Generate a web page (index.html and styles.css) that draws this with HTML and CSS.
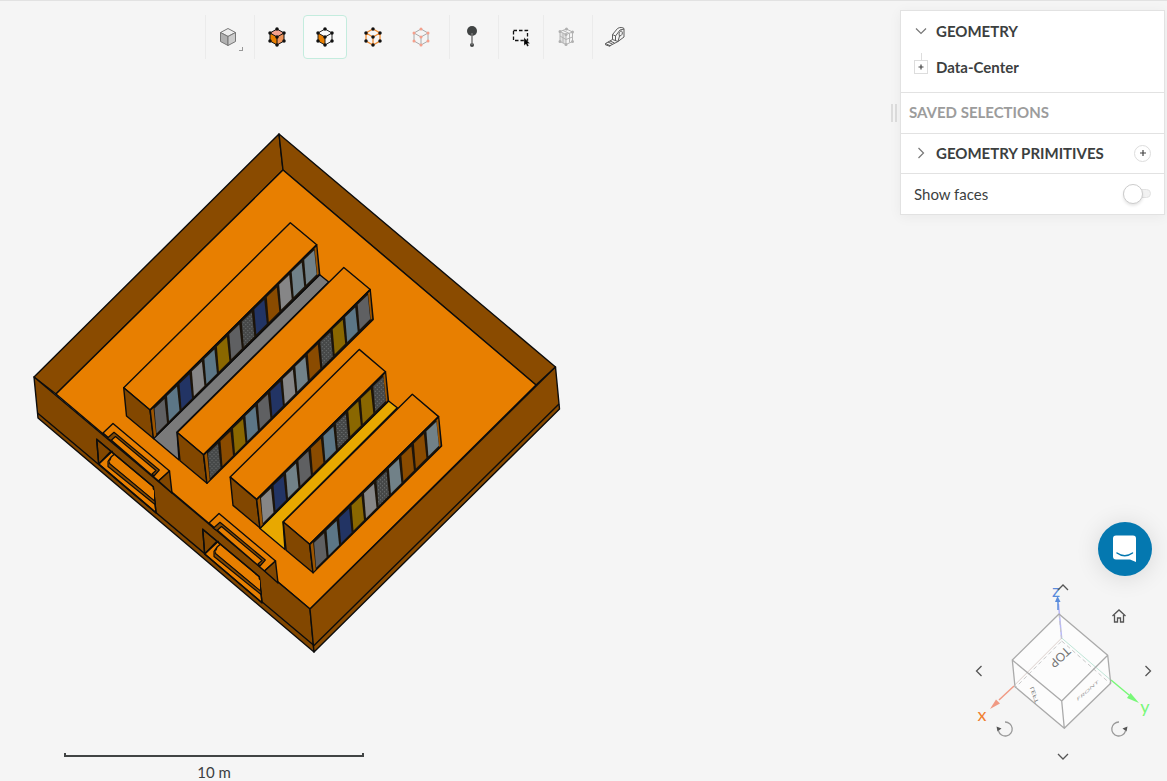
FILE: index.html
```
<!DOCTYPE html>
<html lang="en">
<head>
<meta charset="utf-8">
<title>Data-Center</title>
<link rel="stylesheet" href="styles.css">
</head>
<body>
<main class="viewport">
  <svg class="scene" width="600" height="700" viewBox="0 0 600 700" role="img" aria-label="Data center model">
    <defs>
      <path id="panel" d="M154.5 408.5l10-9.5 2.500 24-10.500 10.500z"/>
      <pattern id="mesh" width="4" height="4" patternUnits="userSpaceOnUse">
        <path fill="#464848" d="M0 0h4v4H0z"/><path fill="#727676" d="M0 1h1v1H0zM2 3h1v1H2z"/>
      </pattern>
      <g id="dock">
        <path class="floor" d="M103 433l10-9.500 56.500 47.500-11 10z"/>
        <path class="front" d="M169.500 471l2.500 22-13.500-12z"/>
        <path class="slot" d="M107.300 438.300l6.700-6 45.300 37.700-5.300 6-2-2 4-3.500-40.500-34-4.500 4z"/>
        <path class="front" d="M96.700 439.300l14.300 12-12.300 13z"/>
        <path class="floor" d="M98.700 464l12.300-12.500 42.300 35.200 2.700 26z"/>
        <path class="line" d="M96.700 439.300l56.600 47.400 2.700 26-57.300-48.700zM98.700 464l14-13"/>
        <path class="slot" d="M111.300 456.700l-3.300 4.600v5.200l47 38v-3.200L109.500 463.500z"/>
        <path class="line" d="M111.300 456.700l3-2.500"/>
        <path fill="#e87f00" d="M112 457.500l-2.500 4.500 44.500 37.500v-9z"/>
      </g>
      <g id="long-rack">
        <path class="floor" d="M123.700 387.700l166.600-165 26.400 22L150 410z"/>
        <path class="front" d="M123.700 387.700L150 410l3.500 28.500-27-22.500z"/>
        <path class="frame" d="M150 410l166.700-165.300 3 30L153.500 438.500z"/>
        <path class="edge" d="M151 410.500l2.500-2.500 2.700 27-2.200 2.500zM314.500 248.500l1.800-1.800 2.400 27-1.500 1.500z"/>
      </g>
      <g id="short-rack">
        <path class="floor" d="M123.700 387.700l129-127.700 26.300 22.300L150 410z"/>
        <path class="front" d="M123.700 387.700L150 410l3.500 28.500-27-22.500z"/>
        <path class="frame" d="M150 410l129-127.700 3 29.500L153.500 438.500z"/>
        <path class="edge" d="M151 410.500l2.500-2.500 2.700 27-2.200 2.500zM276.800 286l1.800-1.800 2.400 27-1.500 1.500z"/>
      </g>
    </defs>
    <path class="wall" d="M279 134l4 36L56 394l-22-17z"/>
    <path class="wall" d="M279 134l276.500 233L536 385 283 170z"/>
    <path class="floor" d="M283 170l253 215-226 224L56 394z"/>
    <path class="aisle" d="M319.700 274.700l9 7.300L177 432l2 28-25.500-21.500z"/>
    <path class="aisle-warm" d="M388.300 400.700l9 7L283 522l2 27.500-25-21z"/>

    <g>
      <use href="#long-rack"/>
      <use href="#panel" class="gray"/>
      <use href="#panel" class="steel" x="12.500" y="-12.400"/>
      <use href="#panel" class="navy" x="25" y="-24.800"/>
      <use href="#panel" class="silver" x="37.400" y="-37.200"/>
      <use href="#panel" class="steel" x="49.900" y="-49.600"/>
      <use href="#panel" class="olive" x="62.400" y="-62"/>
      <use href="#panel" class="gray" x="74.800" y="-74.400"/>
      <use href="#panel" class="mesh" x="87.300" y="-86.800"/>
      <use href="#panel" class="navy" x="99.800" y="-99.200"/>
      <use href="#panel" class="brown" x="112.300" y="-111.600"/>
      <use href="#panel" class="silver" x="124.700" y="-124"/>
      <use href="#panel" class="mist" x="137.200" y="-136.400"/>
      <use href="#panel" class="mist" x="149.700" y="-148.800"/>
    </g>
    <g transform="translate(53.500 44.800)">
      <use href="#long-rack"/>
      <use href="#panel" class="mesh"/>
      <use href="#panel" class="brown" x="12.500" y="-12.400"/>
      <use href="#panel" class="olive" x="25" y="-24.800"/>
      <use href="#panel" class="steel" x="37.400" y="-37.200"/>
      <use href="#panel" class="gray" x="49.900" y="-49.600"/>
      <use href="#panel" class="navy" x="62.400" y="-62"/>
      <use href="#panel" class="silver" x="74.800" y="-74.400"/>
      <use href="#panel" class="mist" x="87.300" y="-86.800"/>
      <use href="#panel" class="brown" x="99.800" y="-99.200"/>
      <use href="#panel" class="mesh" x="112.300" y="-111.600"/>
      <use href="#panel" class="olive" x="124.700" y="-124"/>
      <use href="#panel" class="steel" x="137.200" y="-136.400"/>
      <use href="#panel" class="gray" x="149.700" y="-148.800"/>
    </g>
    <g transform="translate(106.500 89.400)">
      <use href="#short-rack"/>
      <use href="#panel" class="silver"/>
      <use href="#panel" class="navy" x="12.500" y="-12.400"/>
      <use href="#panel" class="mist" x="25" y="-24.800"/>
      <use href="#panel" class="gray" x="37.400" y="-37.200"/>
      <use href="#panel" class="brown" x="49.900" y="-49.600"/>
      <use href="#panel" class="steel" x="62.400" y="-62"/>
      <use href="#panel" class="mesh" x="74.800" y="-74.400"/>
      <use href="#panel" class="olive" x="87.300" y="-86.800"/>
      <use href="#panel" class="olive" x="99.800" y="-99.200"/>
      <use href="#panel" class="mesh" x="112.300" y="-111.600"/>
    </g>
    <g transform="translate(159.600 134.300)">
      <use href="#short-rack"/>
      <use href="#panel" class="gray"/>
      <use href="#panel" class="steel" x="12.500" y="-12.400"/>
      <use href="#panel" class="navy" x="25" y="-24.800"/>
      <use href="#panel" class="olive" x="37.400" y="-37.200"/>
      <use href="#panel" class="silver" x="49.900" y="-49.600"/>
      <use href="#panel" class="mesh" x="62.400" y="-62"/>
      <use href="#panel" class="mist" x="74.800" y="-74.400"/>
      <use href="#panel" class="brown" x="87.300" y="-86.800"/>
      <use href="#panel" class="brown" x="99.800" y="-99.200"/>
      <use href="#panel" class="mist" x="112.300" y="-111.600"/>
    </g>

    <path class="front" d="M34 377l276 232 4 43L38 418z"/>
    <path class="wall" d="M310 609l245.500-242 4 42L314 652z"/>
    <path class="line" d="M37.500 413L314 645.500 559 404"/>
    <use href="#dock"/>
    <use href="#dock" x="106" y="90"/>
  </svg>

  <nav class="toolbar" aria-label="Viewer tools">
    <div class="group">
      <button class="tool" type="button" aria-label="Render mode">
        <svg width="24" height="24" viewBox="0 0 24 24" stroke="#777" stroke-linejoin="round"><path fill="#eee" d="M12 3.500l7.500 4-7.500 4-7.500-4z"/><path fill="#b0b0b0" d="M4.500 7.500l7.500 4v9l-7.500-4z"/><path fill="#ccc" d="M19.500 7.500l-7.500 4v9l7.500-4z"/></svg>
        <span class="corner"></span>
      </button>
    </div>
    <div class="group picks">
      <button class="tool" type="button" aria-label="Pick volumes">
        <svg width="24" height="24" viewBox="0 0 24 24"><path fill="#f4a08c" d="M12 4l7 4-7 4-7-4z"/><path fill="#e87f00" d="M5 8l7 4v8l-7-4z"/><path fill="#f0955c" d="M19 8l-7 4v8l7-4z"/><path fill="none" stroke="#111" d="M12 4l7 4v8l-7 4-7-4V8zM5 8l7 4 7-4M12 12v8"/><path class="nodes" d="M12 4h0M19 8h0M19 16h0M12 20h0M5 16h0M5 8h0M12 12h0"/></svg>
      </button>
      <button class="tool active" type="button" aria-label="Pick faces" aria-pressed="true">
        <svg width="24" height="24" viewBox="0 0 24 24"><path fill="#e87f00" d="M5 8l7 4v8l-7-4z"/><path fill="none" stroke="#222" d="M12 4l7 4v8l-7 4-7-4V8zM5 8l7 4 7-4M12 12v8"/><path class="nodes" d="M12 4h0M19 8h0M19 16h0M12 20h0M5 16h0M5 8h0M12 12h0"/></svg>
      </button>
      <button class="tool" type="button" aria-label="Pick edges">
        <svg width="24" height="24" viewBox="0 0 24 24"><path fill="none" stroke="#f08c32" stroke-width="1.300" d="M12 4l7 4v8l-7 4-7-4V8zM5 8l7 4 7-4M12 12v8"/><path class="nodes" d="M12 4h0M19 8h0M19 16h0M12 20h0M5 16h0M5 8h0M12 12h0"/></svg>
      </button>
      <button class="tool" type="button" aria-label="Pick vertices">
        <svg width="24" height="24" viewBox="0 0 24 24"><path fill="none" stroke="#aaa" d="M12 4l7 4v8l-7 4-7-4V8zM5 8l7 4 7-4M12 12v8"/><path class="nodes pale" d="M12 4h0M19 8h0M19 16h0M12 20h0M5 16h0M5 8h0M12 12h0"/></svg>
      </button>
    </div>
    <div class="group">
      <button class="tool" type="button" aria-label="Probe point">
        <svg width="24" height="24" viewBox="0 0 24 24" fill="#414444"><circle cx="12" cy="6" r="5"/><circle cx="12" cy="20" r="2"/><path stroke="#777" stroke-width="1.500" d="M12 8v12"/></svg>
      </button>
    </div>
    <div class="group tight">
      <button class="tool" type="button" aria-label="Box selection">
        <svg width="24" height="24" viewBox="0 0 24 24"><path fill="none" stroke="#111" stroke-width="1.300" stroke-dasharray="3.500 2" d="M4.500 5.500h14v10h-14z"/><path d="M15 12.500v8l2-1.500 1.200 2.500 1.600-.8-1.200-2.200h2.400z" stroke="#f5f5f5" stroke-width=".3"/></svg>
      </button>
    </div>
    <div class="group">
      <button class="tool" type="button" aria-label="Mesh clip">
        <svg width="24" height="24" viewBox="0 0 24 24" fill="none" stroke="#b4b4b4"><path fill="#e2e2e2" d="M6 6.500l6 3v10l-6-3z"/><path d="M6 6.500l6.500-2.500 6 3v9.500l-6.500 3M12 9.500l6.500-2.500M6 11l6 3.500 6.500-2.500M9 5.500l6.500 3v9M9 8v10"/><path class="nodes faded" d="M6 6.500h0M12.500 4h0M18.500 7h0M18.500 16.500h0M6 16.500h0M12 19.500h0M12 9.500h0"/></svg>
      </button>
    </div>
    <div class="group">
      <button class="tool" type="button" aria-label="Measure">
        <svg width="24" height="24" viewBox="0 0 24 24" fill="none" stroke="#5c5c5c" stroke-linejoin="round"><path d="M9.500 14.500V9.500l5-6c2-1.500 5.500-1.200 6.500 0v8.500l-6 4.500zM9.500 9.500l3 1.500v5M12.500 11l4.500-6 4-1M15 16.500l1.500-5.500c2.500 0 3.500-3 2.500-4.500s-4 1-2.500 4.500M9.500 14.500l-7 4 4.500 2.200 8-4.200M5 17l4.500 2.200M7 16l4.500 2M2.500 18.500v1.300l4.500 1.500v-.8"/></svg>
      </button>
    </div>
  </nav>

  <aside class="side">
    <span class="grip"></span>
    <div class="card">
      <section class="tree">
        <button class="heading" type="button" aria-expanded="true"><svg class="chevron" width="12" height="12" viewBox="0 0 12 12"><path d="M1 3.500l5 5 5-5"/></svg>GEOMETRY</button>
        <button class="heading" type="button" aria-expanded="false"><span class="expand"><svg width="12" height="12" viewBox="0 0 12 12"><path d="M3.500 6h5M6 3.500v5"/></svg></span>Data-Center</button>
      </section>
      <h2 class="row tall muted">SAVED SELECTIONS</h2>
      <div class="row">
        <button class="heading" type="button" aria-expanded="false"><svg class="chevron" width="12" height="12" viewBox="0 0 12 12"><path d="M3.500 1l5 5-5 5"/></svg>GEOMETRY PRIMITIVES</button>
        <button class="add" type="button" aria-label="Add primitive"><svg width="12" height="12" viewBox="0 0 12 12"><path d="M3 6h6M6 3v6"/></svg></button>
      </div>
      <div class="row tall">
        <label class="option" for="faces">Show faces</label>
        <input class="switch" id="faces" type="checkbox" role="switch">
      </div>
    </div>
  </aside>

  <div class="scale"><div class="ruler"></div>10 m</div>

  <button class="chat" type="button" aria-label="Open chat">
    <svg width="28" height="30" viewBox="0 0 28 30"><path fill="#fff" d="M5 1.500h17a3 3 0 0 1 3 3V28l-6-2.500H5a3 3 0 0 1-3-3v-18a3 3 0 0 1 3-3z"/><path fill="none" stroke="#0478b0" stroke-width="1.500" stroke-linecap="round" d="M6 19c4.500 3.500 11 3.500 15.500 0"/></svg>
  </button>

  <div class="navigator">
    <svg class="cube" viewBox="966 574 195 192" fill="none" role="img" aria-label="View cube">
      <path fill="#fff" fill-opacity=".65" d="M1059 614l48.700 41.300 3 28-46.400 45-49.300-41.600-2.700-26.700z"/>
      <path stroke="#b8b8f8" stroke-width="1.500" d="M1061.700 639l-3.200-35"/>
      <path stroke="#c0e6d8" d="M1061.700 638l49 42"/>
      <path stroke="#dcd0cc" d="M1061.700 638l-47 47"/>
      <path stroke="#c8c8c8" stroke-dasharray="4 3" d="M1059 614l2.700 27-46.700 47M1061.700 641l49 43"/>
      <path stroke="#f09a84" stroke-width="1.500" d="M1014 686l-15 14"/><path fill="#f09a84" d="M990 709l6-9.500 4 4z"/>
      <path stroke="#78f878" stroke-width="1.500" d="M1111 680l18 15"/><path fill="#78f878" d="M1139 703l-12-5 3.500-5z"/>
      <path stroke="#5a8cdc" stroke-width="1.500" d="M1058 610v-8"/><path fill="#5a8cdc" d="M1057.500 596l3 6h-5.500z"/>
      <path stroke="#aaa" stroke-width="1.300" stroke-linejoin="round" d="M1059 614l48.700 41.300-46 45.700-49.400-41zM1012.300 660l2.700 26.700 49.300 41.600 46.400-45-3-28M1061.700 701l2.600 27.300"/>
      <text class="face" transform="translate(1060 657) rotate(137)" text-anchor="middle" y="4" font-size="12">TOP</text>
      <text class="face" transform="matrix(.3 .9 .6 -.3 1036 694)" text-anchor="middle" font-size="8">LEFT</text>
      <text class="face faint" transform="matrix(.8 -.7 .1 .5 1088 692)" text-anchor="middle" font-size="8">FRONT</text>
      <text class="axis" x="982" y="721" fill="#f08030">x</text>
      <text class="axis" x="1145" y="713" fill="#78f878">y</text>
      <text class="axis" x="1056" y="597" fill="#5a8cdc">z</text>
    </svg>
    <button class="nav up" type="button" aria-label="Rotate up"><svg width="12" height="12" viewBox="0 0 12 12"><path d="M1 9l5-5 5 5"/></svg></button>
    <button class="nav home" type="button" aria-label="Home view"><svg width="14" height="14" viewBox="0 0 14 14"><path d="M.5 7L7 1l6.500 6M2.500 6v7h3V9h3v4h3V6"/></svg></button>
    <button class="nav left" type="button" aria-label="Rotate left"><svg width="12" height="12" viewBox="0 0 12 12"><path d="M8.500 1l-5 5 5 5"/></svg></button>
    <button class="nav right" type="button" aria-label="Rotate right"><svg width="12" height="12" viewBox="0 0 12 12"><path d="M3.500 1l5 5-5 5"/></svg></button>
    <button class="nav ccw" type="button" aria-label="Roll left"><svg width="18" height="18" viewBox="0 0 18 18"><path class="arc" d="M9 2a7 7 0 1 1-6.500 9"/><path class="tip" d="M.5 6.500l5 2-4 3z"/></svg></button>
    <button class="nav cw" type="button" aria-label="Roll right"><svg width="18" height="18" viewBox="0 0 18 18"><path class="arc" d="M9 2a7 7 0 1 0 6.500 9"/><path class="tip" d="M17.500 6.500l-5 2 4 3z"/></svg></button>
    <button class="nav down" type="button" aria-label="Rotate down"><svg width="12" height="12" viewBox="0 0 12 12"><path d="M1 3l5 5 5-5"/></svg></button>
  </div>
</main>
</body>
</html>
```
FILE: styles.css
```
* { box-sizing: border-box; }

body {
  margin: 0;
  font: 15px/20px Lato, "Open Sans", sans-serif;
  color: #3c3f3f;
}

button {
  border: 0;
  padding: 0;
  background: none;
  font: inherit;
  color: inherit;
  cursor: pointer;
}

svg { display: block; }

.viewport {
  position: relative;
  display: flex;
  justify-content: space-between;
  align-items: flex-start;
  height: 100vh;
  overflow: hidden;
  background: #f5f5f5;
  border-top: 1px solid #e2e2e2;
}

/* model */
.scene {
  position: absolute;
  top: -1px;
  left: 0;
  stroke-linejoin: round;
}
.scene .wall, .scene .front, .scene .floor, .aisle, .aisle-warm, .frame { stroke: #0c0c0c; stroke-width: 1.4; }
.wall { fill: #8a4b00; }
.front { fill: #824700; }
.floor { fill: #e87f00; }
.aisle { fill: #7a7a7a; }
.aisle-warm { fill: #e8a800; }
.frame { fill: #1c140a; }
.edge { fill: #9c5500; }
.line { fill: none; stroke: #0c0c0c; stroke-width: 1.4; }
.slot { fill: #824700; stroke: #0c0c0c; stroke-width: 1.2; }
.gray { fill: #5f6062; }
.steel { fill: #5c7686; }
.navy { fill: #223464; }
.silver { fill: #868687; }
.olive { fill: #8a6700; }
.mesh { fill: url(#mesh); }
.brown { fill: #8a4b00; }
.mist { fill: #718188; }

/* toolbar */
.toolbar {
  position: relative;
  display: flex;
  padding: 14px 0 0 205px;
}
.group {
  display: flex;
  gap: 4px;
  height: 44px;
  padding-right: 4px;
  border-left: 1px solid #ebebeb;
}
.picks { padding-right: 6px; }
.tight { padding-right: 0; }
.tool {
  position: relative;
  display: grid;
  place-items: center;
  width: 44px;
  height: 44px;
  border: 1px solid transparent;
  border-radius: 4px;
}
.tool.active { background: #fafafa; border-color: #c4ecde; }
.corner {
  position: absolute;
  right: 6px;
  bottom: 7px;
  width: 4px;
  height: 4px;
  border: solid #999;
  border-width: 0 1px 1px 0;
}
.nodes { fill: none; stroke: #111; stroke-width: 3.5; stroke-linecap: round; }
.nodes.pale { stroke: #f5a08c; stroke-width: 3; }
.nodes.faded { stroke: #b0b0b0; stroke-width: 3; }

/* side panel */
.side {
  position: relative;
  display: flex;
  align-items: center;
  gap: 3px;
  padding: 9px 2px 0 0;
}
.grip {
  width: 6px;
  height: 18px;
  border: solid #ddd;
  border-width: 0 2px;
}
.card {
  width: 265px;
  background: #fff;
  border: 1px solid #e2e2e2;
  box-shadow: 0 2px 12px #0000000d;
}
.tree {
  display: grid;
  gap: 16px;
  padding: 10px 14px 15px;
}
.heading {
  display: flex;
  align-items: center;
  gap: 9px;
  font-weight: 700;
}
.chevron { fill: none; stroke: #777; stroke-width: 1.2; }
.expand {
  position: relative;
  width: 12px;
  height: 12px;
  outline: 1px solid #ddd;
}
.expand::before {
  content: "";
  position: absolute;
  left: 6px;
  bottom: 12px;
  height: 8px;
  border-left: 1px solid #ddd;
}
.expand svg, .add svg { stroke: #444; stroke-width: 1.2; }
.row {
  display: flex;
  align-items: center;
  justify-content: space-between;
  min-height: 40px;
  margin: 0;
  padding: 0 13px 1px;
  border-top: 1px solid #e2e2e2;
}
.row .heading { margin-left: 1px; }
.tall { min-height: 41px; }
.muted {
  padding: 0 8px 2px;
  font-size: 15px;
  font-weight: 700;
  color: #9c9c9c;
}
.add {
  display: grid;
  place-items: center;
  width: 17px;
  height: 17px;
  border: 1px solid #ddd;
  border-radius: 50%;
}
.switch {
  appearance: none;
  position: relative;
  width: 28px;
  height: 9px;
  margin: 0;
  border: 1px solid #e2e2e2;
  border-radius: 5px;
  background: #f2f2f2;
}
.switch::before {
  content: "";
  position: absolute;
  left: -1px;
  top: -6px;
  width: 18px;
  height: 18px;
  border: 1px solid #ccc;
  border-radius: 50%;
  background: #fff;
  box-shadow: 0 2px 3px #0000001a;
}

/* overlays on the canvas */
.scale {
  position: absolute;
  left: 64px;
  bottom: -1px;
  width: 300px;
  text-align: center;
}
.ruler {
  height: 4px;
  margin-bottom: 5px;
  border: solid #414444;
  border-width: 0 2px 2px;
}
.chat {
  position: absolute;
  right: 15px;
  bottom: 205px;
  display: grid;
  place-items: center;
  width: 54px;
  height: 54px;
  border-radius: 50%;
  background: #0478b0;
  box-shadow: 0 2px 24px #0000001f;
}
.navigator {
  position: absolute;
  right: 6px;
  bottom: 15px;
  display: grid;
  grid-template: 26px 32px 78px 38px 18px / 26px 26px 90px 22px 4px 27px;
  place-items: center;
}
.cube { grid-area: 1 / 1 / 6 / 7; width: 195px; height: 192px; }
.face { fill: #777; }
.face.faint { fill: #999; }
.axis { font-size: 18px; text-anchor: middle; stroke: currentColor; stroke-width: 0; }
.nav { position: relative; }
.nav path { fill: none; stroke: #555; stroke-width: 1.3; }
.nav .arc { stroke: #999; }
.nav .tip { fill: #555; stroke: none; }
.up { grid-area: 1 / 3; }
.home { grid-area: 2 / 4; }
.left { grid-area: 3 / 1; }
.right { grid-area: 3 / 6; }
.ccw { grid-area: 4 / 2; }
.cw { grid-area: 4 / 4; }
.down { grid-area: 5 / 3; }
```
